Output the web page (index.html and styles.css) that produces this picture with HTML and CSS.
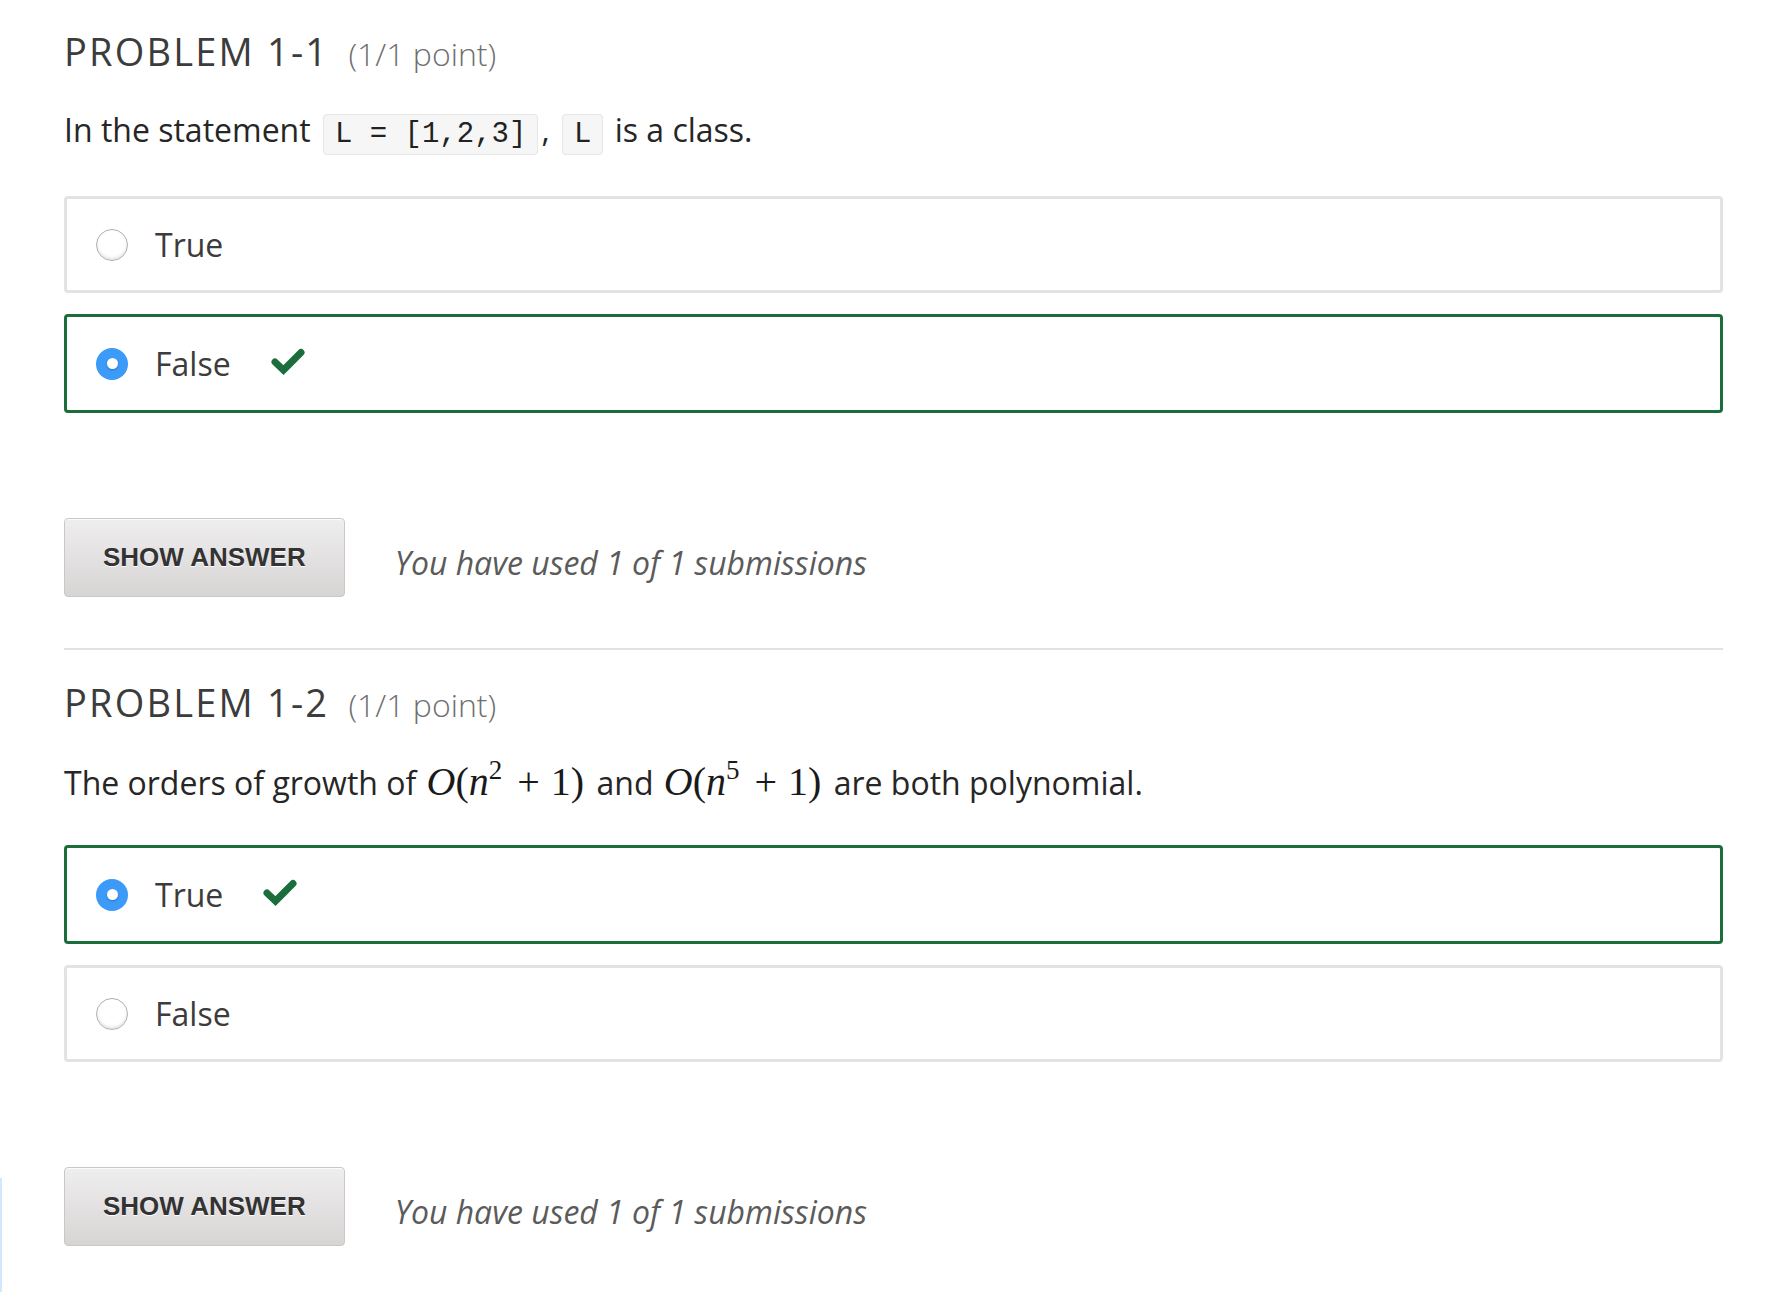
FILE: index.html
```html
<!DOCTYPE html>
<html lang="en">
<head>
<meta charset="utf-8">
<title>Problems</title>
<link rel="stylesheet" href="styles.css">
</head>
<body>
<div class="edge-line"></div>
<main class="course">
  <section class="problem">
    <h2 class="problem-title">PROBLEM 1-1 <span class="points">(1/1 point)</span></h2>
    <p class="statement">In the statement <code class="code">L = [1,2,3]</code>, <code class="code">L</code> is a class.</p>
    <div class="choices">
      <label class="choice">
        <span class="radio"></span>
        <span class="choice-text">True</span>
      </label>
      <label class="choice correct">
        <span class="radio checked"></span>
        <span class="choice-text">False</span>
        <svg class="check" width="34" height="27" viewBox="0 0 34 27"><path d="M4 14 L12.5 22 L30 4.5" fill="none" stroke="#1b6e3b" stroke-width="7" stroke-linecap="round" stroke-linejoin="miter"/></svg>
      </label>
    </div>
    <div class="actions">
      <button class="show-answer">SHOW ANSWER</button>
      <span class="submissions">You have used 1 of 1 submissions</span>
    </div>
  </section>
  <section class="problem">
    <h2 class="problem-title">PROBLEM 1-2 <span class="points">(1/1 point)</span></h2>
    <p class="statement math-line">The orders of growth of <span class="math"><i>O</i>(<i>n</i><sup>2</sup><span class="op">+</span>1)</span> and <span class="math"><i>O</i>(<i>n</i><sup>5</sup><span class="op">+</span>1)</span> are both polynomial.</p>
    <div class="choices">
      <label class="choice correct">
        <span class="radio checked"></span>
        <span class="choice-text">True</span>
        <svg class="check" width="34" height="27" viewBox="0 0 34 27"><path d="M4 14 L12.5 22 L30 4.5" fill="none" stroke="#1b6e3b" stroke-width="7" stroke-linecap="round" stroke-linejoin="miter"/></svg>
      </label>
      <label class="choice">
        <span class="radio"></span>
        <span class="choice-text">False</span>
      </label>
    </div>
    <div class="actions">
      <button class="show-answer">SHOW ANSWER</button>
      <span class="submissions">You have used 1 of 1 submissions</span>
    </div>
  </section>
</main>
</body>
</html>
```
FILE: styles.css
```css
html, body {
  margin: 0;
  padding: 0;
  background: #ffffff;
}

body {
  font-family: "Open Sans", "Noto Sans", sans-serif;
  color: #313131;
  position: relative;
  min-height: 1292px;
  overflow: hidden;
}

.edge-line {
  position: absolute;
  left: 0;
  top: 1178px;
  bottom: 0;
  width: 2px;
  background: #d4e8fb;
}

.course {
  margin-left: 64px;
  width: 1659px;
}

.problem {
  padding-top: 29px;
  padding-bottom: 51px;
  border-bottom: 2px solid #e1e1e1;
}

.problem:last-child {
  border-bottom: none;
  padding-top: 30px;
}

.problem-title {
  margin: 0;
  font-size: 38px;
  line-height: 44px;
  font-weight: 400;
  letter-spacing: 2.2px;
  color: #3c3c3c;
}

.points {
  font-size: 32px;
  letter-spacing: 0;
  color: #6f6f6f;
  margin-left: 7px;
  font-weight: 300;
}

.statement {
  margin: 32px 0 0;
  font-size: 32px;
  line-height: 44px;
  color: #262626;
}

.statement.math-line {
  line-height: 46px;
}

.code {
  font-family: "Liberation Mono", "Courier New", monospace;
  font-size: 29px;
  background: #f6f6f6;
  border: 1px solid #e6e6e6;
  border-radius: 4px;
  padding: 3px 11px;
  margin: 0 3px 0 4px;
  color: #222;
}

.math {
  font-family: "Liberation Serif", "Times New Roman", serif;
  font-size: 40px;
  color: #1a1a1a;
  margin: 0 4px 0 2px;
}

.math sup {
  font-size: 27px;
  line-height: 0;
  vertical-align: 16px;
}

.math .op {
  margin: 0 11px 0 15px;
}

.choices {
  margin-top: 39px;
  display: flex;
  flex-direction: column;
  gap: 21px;
}

.choice {
  display: flex;
  align-items: center;
  box-sizing: border-box;
  height: 97px;
  border: 3px solid #e3e3e3;
  border-radius: 4px;
  padding-left: 29px;
  font-size: 32px;
  color: #3c3c3c;
}

.choice.correct {
  height: 99px;
  border-color: #1b6e3b;
}

.radio {
  width: 32px;
  height: 32px;
  box-sizing: border-box;
  border-radius: 50%;
  border: 1px solid #b0b0b0;
  background: #fff;
  box-shadow: inset 0 -2px 3px rgba(0,0,0,0.10);
  margin-right: 27px;
  flex: none;
  display: flex;
  align-items: center;
  justify-content: center;
}

.radio.checked {
  border: none;
  background: #3c9af8;
  box-shadow: none;
}

.radio.checked::after {
  content: "";
  width: 11px;
  height: 11px;
  border-radius: 50%;
  background: #fff;
  box-shadow: 0 1px 2px rgba(0,0,0,0.25);
}

.choice-text {
  line-height: 44px;
}

.check {
  margin-left: 40px;
  margin-top: -4px;
  flex: none;
}

.actions {
  margin-top: 105px;
  display: flex;
  align-items: center;
}

.show-answer {
  box-sizing: border-box;
  height: 79px;
  padding: 0 38px;
  font-family: "Liberation Sans", Arial, sans-serif;
  font-weight: 700;
  font-size: 26px;
  color: #333;
  text-shadow: 0 1px 0 #fff;
  background: linear-gradient(#efeeee, #d7d4d4);
  border: 1px solid #cbc7c7;
  border-radius: 4px;
  box-shadow: inset 0 1px 0 #fafafa;
}

.submissions {
  margin-left: 50px;
  padding-top: 10px;
  font-style: italic;
  font-size: 32px;
  line-height: 44px;
  color: #5b5b5b;
}
```
